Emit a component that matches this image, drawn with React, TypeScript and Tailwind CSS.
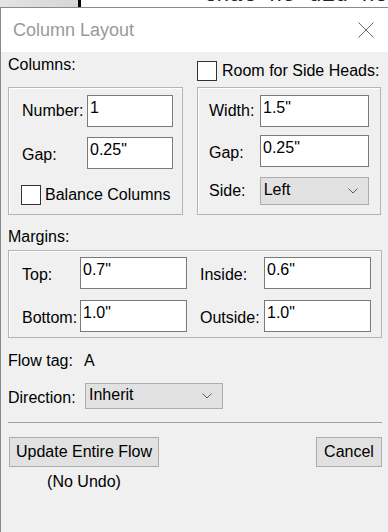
import { ReactNode } from "react";

const font = { fontFamily: '"Liberation Sans", Arial, sans-serif' };

function Field({ value, className = "" }: { value: string; className?: string }) {
  return (
    <div
      className={`h-[32px] bg-white border border-[#7a7a7a] pl-[2px] pt-[3px] text-[16px] leading-[18px] text-black ${className}`}
    >
      {value}
    </div>
  );
}

function Select({ value, className = "" }: { value: string; className?: string }) {
  return (
    <div
      className={`flex items-center justify-between bg-[#e1e1e1] border border-[#adadad] pl-[3px] pr-[10px] text-[16px] leading-[18px] ${className}`}
    >
      <span className="-mt-[2px]">{value}</span>
      <svg width="10" height="6" viewBox="0 0 10 6" fill="none">
        <path d="M0.5 0.5 L5 5 L9.5 0.5" stroke="#5a5a5a" strokeWidth="1" />
      </svg>
    </div>
  );
}

function Check({ className = "" }: { className?: string }) {
  return <div className={`w-[20px] h-[20px] bg-white border border-[#333] shrink-0 ${className}`} />;
}

function Group({ children, className = "" }: { children: ReactNode; className?: string }) {
  return (
    <div className={`border border-[#b4b4b4] shadow-[inset_1px_1px_0_#ffffff] ${className}`}>{children}</div>
  );
}

export default function App() {
  return (
    <div className="w-[388px] h-[532px] overflow-hidden bg-white text-black" style={font}>
      {/* window behind the dialog */}
      <div className="flex h-[7px] overflow-hidden">
        <div className="w-[78px] bg-gradient-to-r from-[#e4e4e4] to-[#d6d6d6]" />
        <div className="w-[3px] bg-black" />
        <div className="flex-1 bg-white pl-[122px] overflow-hidden">
          <div
            className="whitespace-nowrap text-[22px] leading-[22px] -mt-[15px] text-[#222]"
            style={{ fontFamily: '"Liberation Mono", "Courier New", monospace' }}
          >
            that he did not
          </div>
        </div>
      </div>

      {/* dialog */}
      <div className="border-l border-t border-[#8a8a8a] h-[525px] flex flex-col">
        <div className="h-[44px] bg-white flex items-center justify-between pl-[12px] pr-[14px]">
          <span className="text-[18px] text-[#9a9a9a] mt-[1px]">Column Layout</span>
          <svg width="16" height="16" viewBox="0 0 16 16" fill="none" className="-mt-[1px]">
            <path d="M0.5 0.5 L15.5 15.5 M15.5 0.5 L0.5 15.5" stroke="#6a6a6a" strokeWidth="1" />
          </svg>
        </div>

        <div className="flex-1 bg-[#f0f0f0] pl-[7px] pr-[6px] text-[16px] leading-[18px]">
          <div className="flex gap-[14px]">
            {/* columns */}
            <div className="w-[175px]">
              <div className="h-[35px] flex items-center pb-[9px]">Columns:</div>
              <Group className="h-[128px] pt-[7px] pl-[13px] pr-[9px]">
                <div className="flex items-center">
                  <span className="w-[65px]">Number:</span>
                  <Field value="1" className="w-[86px]" />
                </div>
                <div className="flex items-center mt-[10px]">
                  <span className="w-[65px] mt-[3px]">Gap:</span>
                  <Field value={'0.25"'} className="w-[86px]" />
                </div>
                <div className="flex items-center mt-[16px] -ml-[1px] gap-[4px]">
                  <Check />
                  <span>Balance Columns</span>
                </div>
              </Group>
            </div>

            {/* side heads */}
            <div className="w-[184px]">
              <div className="h-[35px] flex items-center gap-[5px] pt-[3px]">
                <Check />
                <span>Room for Side Heads:</span>
              </div>
              <Group className="h-[128px] pt-[7px] pl-[11px] pr-[11px]">
                <div className="flex items-center">
                  <span className="w-[51px]">Width:</span>
                  <Field value={'1.5"'} className="w-[109px]" />
                </div>
                <div className="flex items-center mt-[8px]">
                  <span className="w-[51px] mt-[3px]">Gap:</span>
                  <Field value={'0.25"'} className="w-[109px]" />
                </div>
                <div className="flex items-center mt-[10px]">
                  <span className="w-[51px]">Side:</span>
                  <Select value="Left" className="w-[110px] h-[28px]" />
                </div>
              </Group>
            </div>
          </div>

          {/* margins */}
          <div className="h-[35px] flex items-center pt-[9px]">Margins:</div>
          <Group className="h-[88px] pt-[6px] pl-[13px] pr-[9px]">
            <div className="flex items-center">
              <span className="w-[58px] mt-[3px]">Top:</span>
              <Field value={'0.7"'} className="w-[107px]" />
              <span className="w-[64px] ml-[13px] mt-[3px]">Inside:</span>
              <Field value={'0.6"'} className="w-[107px]" />
            </div>
            <div className="flex items-center mt-[11px]">
              <span className="w-[58px] mt-[3px]">Bottom:</span>
              <Field value={'1.0"'} className="w-[107px]" />
              <span className="w-[64px] ml-[13px] mt-[3px]">Outside:</span>
              <Field value={'1.0"'} className="w-[107px]" />
            </div>
          </Group>

          <div className="flex items-center h-[22px] mt-[12px]">
            <span className="w-[76px]">Flow tag:</span>
            <span>A</span>
          </div>
          <div className="flex items-center h-[26px] mt-[11px]">
            <span className="w-[77px] mt-[3px]">Direction:</span>
            <Select value="Inherit" className="w-[138px] h-[26px]" />
          </div>

          <div className="h-px bg-[#a0a0a0] mt-[13px]" />

          <div className="flex justify-between items-start mt-[14px]">
            <div className="flex flex-col items-center ml-px">
              <button className="w-[150px] h-[30px] bg-[#e1e1e1] border border-[#adadad] text-[16px] leading-[18px]">
                Update Entire Flow
              </button>
              <span className="mt-[6px]">(No Undo)</span>
            </div>
            <button className="w-[66px] h-[30px] bg-[#e1e1e1] border border-[#adadad] text-[16px] leading-[18px]">
              Cancel
            </button>
          </div>
        </div>
      </div>
    </div>
  );
}
